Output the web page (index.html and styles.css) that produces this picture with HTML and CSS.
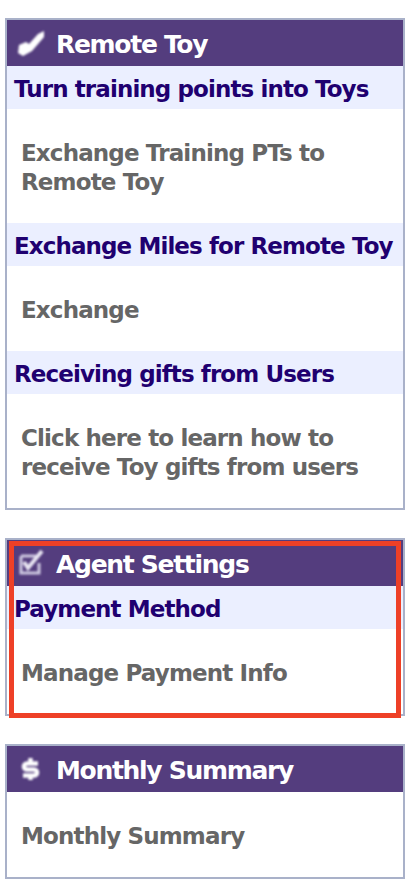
FILE: index.html
```html
<!DOCTYPE html>
<html lang="en">
<head>
    <meta charset="UTF-8">
    <meta name="viewport" content="width=device-width, initial-scale=1.0">
    <title>Agent Menu</title>
    <link rel="stylesheet" href="styles.css">
</head>
<body>
    <!-- Remote Toy -->
    <section class="panel panel-toy">
        <h2 class="panel-head">
            <svg class="head-icon" viewBox="0 0 30 30"><path d="M1 25 L2 17 L9 14 L12 16 L21 6 L27 3 L27 9 L15 23 L6 28 Z" fill="#fff"/></svg>
            <span>Remote Toy</span>
        </h2>
        <h3 class="sub-head"><span>Turn training points into Toys</span></h3>
        <div class="item item-two"><span>Exchange Training PTs to<br>Remote Toy</span></div>
        <h3 class="sub-head"><span>Exchange Miles for Remote Toy</span></h3>
        <div class="item"><span>Exchange</span></div>
        <h3 class="sub-head"><span>Receiving gifts from Users</span></h3>
        <div class="item item-two"><span>Click here to learn how to<br>receive Toy gifts from users</span></div>
    </section>

    <!-- Agent Settings -->
    <section class="panel panel-agent">
        <h2 class="panel-head">
            <svg class="head-icon" viewBox="0 0 30 30">
                <path d="M4 8 H19 M4 8 V25 H22 V15" fill="none" stroke="#cfc9e2" stroke-width="3"/>
                <path d="M7 14 L11 20 L25 3" fill="none" stroke="#e8e5f2" stroke-width="4"/>
            </svg>
            <span>Agent Settings</span>
        </h2>
        <h3 class="sub-head"><span>Payment Method</span></h3>
        <div class="item"><span>Manage Payment Info</span></div>
        <div class="highlight"></div>
    </section>

    <!-- Monthly Summary -->
    <section class="panel panel-month">
        <h2 class="panel-head">
            <svg class="head-icon" viewBox="0 0 30 30">
                <path d="M21 9.5 H10 A3 3 0 0 0 10 15.5 H17 A3 3 0 0 1 17 21.5 H6" fill="none" stroke="#fff" stroke-width="4.6"/>
                <path d="M13.5 4 V8 M13.5 22 V26" stroke="#fff" stroke-width="4.4"/>
            </svg>
            <span>Monthly Summary</span>
        </h2>
        <div class="item"><span>Monthly Summary</span></div>
    </section>
</body>
</html>
```

FILE: styles.css
```css
/* Global */
* {
    margin: 0;
    padding: 0;
    box-sizing: border-box;
}

body {
    background: #fff;
    padding: 18px 13px 0 5px;
    font-family: "DejaVu Sans", Verdana, sans-serif;
    font-weight: bold;
}

/* Panels */
.panel {
    position: relative;
    border: 2px solid #a9b1c9;
    background: #fff;
}

.panel-agent {
    margin-top: 28px;
    height: 178px;
}

.panel-month {
    margin-top: 28px;
    height: 135px;
}

.panel-head {
    display: flex;
    align-items: center;
    gap: 9px;
    height: 46px;
    padding-left: 10px;
    background: #543d7e;
    color: #fff;
    font-size: 25px;
    letter-spacing: -1.3px;
}

.panel-head span {
    padding-top: 3px;
}

.head-icon {
    width: 30px;
    height: 30px;
    flex-shrink: 0;
    filter: blur(0.8px);
}

.sub-head {
    display: flex;
    align-items: center;
    height: 43px;
    padding-left: 7px;
    background: #ebefff;
    color: #1f0070;
    font-size: 23px;
    letter-spacing: -0.9px;
    white-space: nowrap;
}

.sub-head span {
    padding-top: 2px;
}

.item {
    display: flex;
    align-items: center;
    height: 85px;
    padding-left: 14px;
    color: #666;
    font-size: 23px;
    line-height: 29px;
    letter-spacing: -0.85px;
}

.item span {
    padding-top: 4px;
}

.item-two {
    height: 114px;
}

/* Red marker drawn over the agent panel */
.highlight {
    position: absolute;
    top: 1px;
    left: 2px;
    width: 392px;
    height: 177px;
    border: 5px solid #ee4027;
}
```
